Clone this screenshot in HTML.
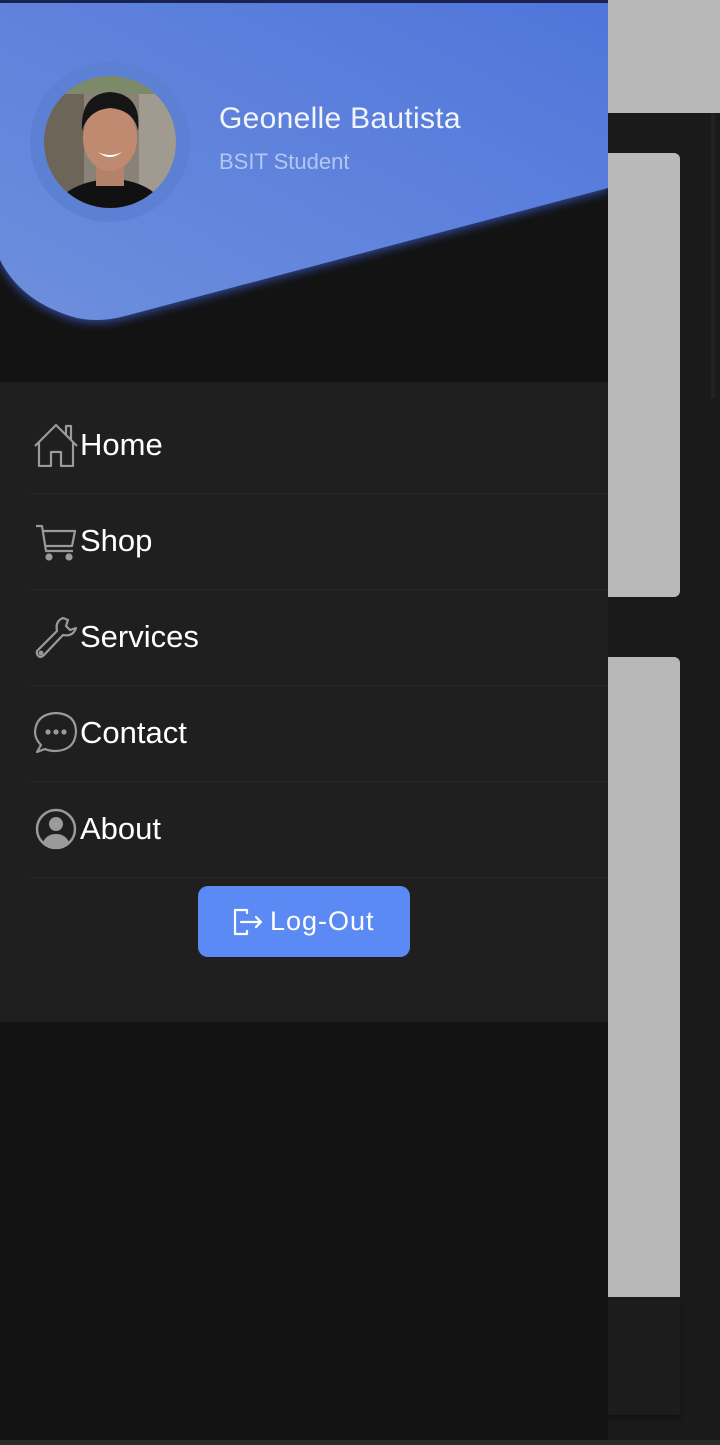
<!DOCTYPE html>
<html><head><meta charset="utf-8"><style>
*{margin:0;padding:0;box-sizing:border-box}
body{width:720px;height:1445px;background:#1a1a1a;position:relative;overflow:hidden;font-family:"Liberation Sans",sans-serif}
.abs{position:absolute}
.row{position:absolute;left:0;width:608px;height:96px}
.row .t{position:absolute;left:80px;top:31px;font-size:31px;color:#fff;line-height:34px}
.row .ic{position:absolute;left:33px;top:24px;width:46px;height:46px}
.sep{position:absolute;left:30px;width:578px;height:1px;background:#262626}
</style></head><body>
<div class="abs" style="left:608px;top:0;width:112px;height:113px;background:#b8b8b8"></div>
<div class="abs" style="left:608px;top:153px;width:72px;height:444px;background:#b9b9b9;border-radius:0 6px 6px 0"></div>
<div class="abs" style="left:608px;top:657px;width:72px;height:640px;background:#b8b8b8;border-radius:0 6px 0 0"></div>
<div class="abs" style="left:608px;top:1300px;width:72px;height:115px;background:#1c1c1c;box-shadow:0 3px 4px #111"></div>
<div class="abs" style="left:711px;top:113px;width:4px;height:285px;background:#222"></div>
<div class="abs" style="left:0;top:1440px;width:720px;height:5px;background:#2a2a2a"></div>
<div class="abs" style="left:0;top:0;width:608px;height:1440px;background:#131313"></div>
<svg class="abs" style="left:0;top:0" width="608" height="380">
<defs><linearGradient id="g" x1="0" y1="1" x2="1" y2="0"><stop offset="0" stop-color="#6e8fdc"/><stop offset="1" stop-color="#4f75db"/></linearGradient>
<filter id="f" x="-10%" y="-10%" width="120%" height="130%"><feGaussianBlur stdDeviation="5"/></filter></defs>
<path d="M0 0H608V190L125 318Q95 326 70 318Q20 302 0 262Z" fill="#3c5fd0" filter="url(#f)" opacity="0.8"/>
<path d="M0 0H608V188L125 316Q95 324 70 316Q20 300 0 260Z" fill="url(#g)"/>
<rect width="608" height="3" fill="#1a2250"/>
</svg>
<div class="abs" style="left:30px;top:62px;width:160px;height:160px;border-radius:50%;background:#5b80d4"></div>
<svg class="abs" style="left:44px;top:76px" width="132" height="132">
<defs><clipPath id="c"><circle cx="66" cy="66" r="66"/></clipPath></defs>
<g clip-path="url(#c)">
<rect width="132" height="132" fill="#8a8276"/>
<rect x="0" y="0" width="40" height="132" fill="#6d6558"/>
<rect x="95" y="0" width="37" height="132" fill="#a09a90"/>
<rect x="0" y="0" width="132" height="18" fill="#7c8a6a"/>
<path d="M10 132Q20 110 55 104H80Q112 110 122 132Z" fill="#111"/>
<rect x="52" y="88" width="28" height="22" fill="#b4826a"/>
<ellipse cx="66" cy="62" rx="27" ry="33" fill="#c08a70"/>
<path d="M38 55Q36 18 66 16Q98 18 94 55Q90 34 66 32Q44 34 38 55Z" fill="#151515"/>
<path d="M54 76Q66 86 78 76Q66 82 54 76Z" fill="#fff"/>
</g></svg>
<div class="abs" style="left:219px;top:102px;font-size:30px;color:#f3f5fc;letter-spacing:0.3px">Geonelle Bautista</div>
<div class="abs" style="left:219px;top:149px;font-size:22px;color:#b3c5f2">BSIT Student</div>
<div class="abs" style="left:0;top:382px;width:608px;height:640px;background:#1f1f1f">
<div class="row" style="top:15px"><svg class="ic" viewBox="0 0 46 46" fill="none" stroke="#9a9a9a" stroke-width="2.2" stroke-linejoin="round"><path d="M2 25L23 4L44 25M6 21V45H18V31H28V45H40V21M33 14V5H38V19"/></svg><div class="t">Home</div></div>
<div class="sep" style="top:111px"></div>
<div class="row" style="top:111px"><svg class="ic" viewBox="0 0 46 46" fill="none" stroke="#9a9a9a" stroke-width="2.2" stroke-linejoin="round"><path d="M3 9H9L13 34H40M10 14H42L39 29H12"/><circle cx="16" cy="40" r="2.5" fill="#9a9a9a"/><circle cx="36" cy="40" r="2.5" fill="#9a9a9a"/></svg><div class="t">Shop</div></div>
<div class="sep" style="top:207px"></div>
<div class="row" style="top:207px"><svg class="ic" viewBox="0 0 46 46" fill="none" stroke="#9a9a9a" stroke-width="2.2" stroke-linejoin="round"><path d="M30 5Q22 8 24 18L4 38Q3 42 7 44Q9 44 11 42L30 22Q40 24 43 15L37 17L33 13L35 7Z"/><circle cx="8" cy="40" r="1.3"/></svg><div class="t">Services</div></div>
<div class="sep" style="top:303px"></div>
<div class="row" style="top:303px"><svg class="ic" viewBox="0 0 46 46" fill="none" stroke="#9a9a9a" stroke-width="2.2"><path d="M8 36Q2 30 2 23Q3 5 23 4Q43 5 43 23Q42 41 23 42Q16 42 12 40L4 43Z" stroke-linejoin="round"/><circle cx="15" cy="23" r="1.5" fill="#9a9a9a"/><circle cx="23" cy="23" r="1.5" fill="#9a9a9a"/><circle cx="31" cy="23" r="1.5" fill="#9a9a9a"/></svg><div class="t">Contact</div></div>
<div class="sep" style="top:399px"></div>
<div class="row" style="top:399px"><svg class="ic" viewBox="0 0 46 46"><circle cx="23" cy="24" r="19" fill="none" stroke="#9a9a9a" stroke-width="2.5"/><circle cx="23" cy="19" r="7" fill="#9a9a9a"/><path d="M10 37Q14 29 23 29Q32 29 36 37Q30 43 23 43Q16 43 10 37Z" fill="#9a9a9a"/></svg><div class="t">About</div></div>
<div class="sep" style="top:495px"></div>
<div class="abs" style="left:198px;top:504px;width:212px;height:71px;background:#5b8af5;border-radius:10px">
<svg class="abs" style="left:34px;top:21px" width="32" height="30" viewBox="0 0 32 30" fill="none" stroke="#fff" stroke-width="2.2" stroke-linejoin="round" stroke-linecap="round"><path d="M15 6V3H3V27H15V24M9 15H29M24 10L29 15L24 20"/></svg>
<div class="abs" style="left:72px;top:20px;font-size:27px;color:#fff;letter-spacing:1px">Log-Out</div>
</div>
</div>
</body></html>
